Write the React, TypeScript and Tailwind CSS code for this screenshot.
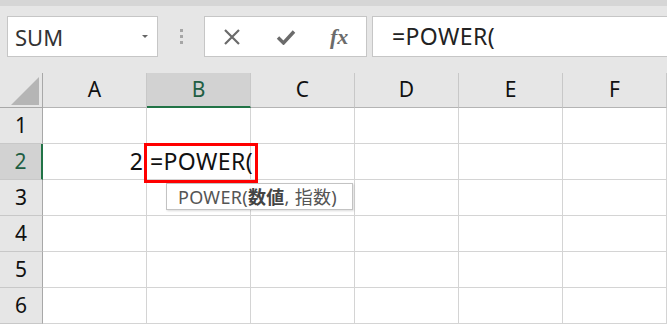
import React from 'react';

const columns = ['A', 'B', 'C', 'D', 'E', 'F'];
const rows = [1, 2, 3, 4, 5, 6];

export default function App() {
  return (
    <div className="relative w-[667px] h-[325px] overflow-hidden bg-white font-['Noto_Sans','Noto_Sans_CJK_JP',sans-serif]">
      {/* Top strip */}
      <div className="h-[6px] bg-[#d6d6d6]" />

      {/* Formula bar */}
      <div className="h-[67px] bg-[#e6e6e6] flex items-start pt-[10px] pl-[7px]">
        <div className="w-[151px] h-[41px] bg-white border border-[#c6c6c6] flex items-center justify-between pl-[7px] pr-[9px]">
          <span className="text-[22px] text-[#333] leading-none">SUM</span>
          <svg width="6" height="3" viewBox="0 0 6 3">
            <polygon points="0,0 6,0 3,3" fill="#666" />
          </svg>
        </div>
        <div className="w-[46px] h-[41px] flex flex-col items-center justify-center gap-[3px]">
          <span className="w-[3px] h-[3px] bg-[#a6a6a6]" />
          <span className="w-[3px] h-[3px] bg-[#a6a6a6]" />
          <span className="w-[3px] h-[3px] bg-[#a6a6a6]" />
        </div>
        <div className="w-[163px] h-[41px] bg-white border border-[#c6c6c6] flex items-center">
          <div className="w-[54px] flex justify-center">
            <svg width="18" height="16" viewBox="0 0 18 16">
              <path d="M2 1 L16 15 M16 1 L2 15" stroke="#6b6b6b" strokeWidth="2.2" fill="none" />
            </svg>
          </div>
          <div className="w-[54px] flex justify-center">
            <svg width="20" height="16" viewBox="0 0 20 16">
              <path d="M2 8.5 L7.5 14 L18 2.5" stroke="#6b6b6b" strokeWidth="3.4" fill="none" strokeLinejoin="miter" />
            </svg>
          </div>
          <div className="w-[54px] flex justify-center">
            <span className="font-['Liberation_Serif',serif] italic font-bold text-[22px] text-[#6b6b6b] leading-none">fx</span>
          </div>
        </div>
        <div className="ml-[5px] flex-1 h-[41px] bg-white border-y border-l border-[#c6c6c6] flex items-center pl-[19px]">
          <span className="text-[23px] text-[#222] leading-none tracking-[0.4px]">=POWER(</span>
        </div>
      </div>

      {/* Sheet grid */}
      <div className="grid grid-cols-[43px_repeat(6,104px)] grid-rows-[35px_repeat(6,36px)]">
        <div className="bg-[#e6e6e6] border-r border-b border-[#a8a8a8] flex items-end justify-end pr-[3px] pb-[2px]">
          <svg width="28" height="28" viewBox="0 0 28 28">
            <polygon points="28,0 28,28 0,28" fill="#b5b5b5" />
          </svg>
        </div>
        {columns.map(c =>
          c === 'B' ? (
            <div key={c} className="bg-[#d2d2d2] border-r border-[#c8c8c8] border-b-2 border-b-[#217346] flex items-center justify-center text-[21px] text-[#215e43]">
              {c}
            </div>
          ) : (
            <div key={c} className="bg-[#e6e6e6] border-r border-[#c8c8c8] border-b border-b-[#b4b4b4] flex items-center justify-center text-[21px] text-[#111]">
              {c}
            </div>
          )
        )}
        {rows.map(r => (
          <React.Fragment key={r}>
            {r === 2 ? (
              <div className="bg-[#d2d2d2] border-r-2 border-r-[#217346] border-b border-b-[#c8c8c8] flex items-center justify-center text-[21px] text-[#215e43]">
                {r}
              </div>
            ) : (
              <div className="bg-[#e6e6e6] border-r border-r-[#a8a8a8] border-b border-b-[#c8c8c8] flex items-center justify-center text-[21px] text-[#111]">
                {r}
              </div>
            )}
            {columns.map(c => (
              <div key={c} className="border-r border-b border-[#d4d4d4] flex items-center">
                {r === 2 && c === 'A' && (
                  <span className="ml-auto pr-[3px] text-[23px] text-[#111] leading-none">2</span>
                )}
                {r === 2 && c === 'B' && (
                  <span className="pl-[3px] text-[23px] text-[#111] leading-none whitespace-nowrap tracking-[0.4px]">=POWER(</span>
                )}
              </div>
            ))}
          </React.Fragment>
        ))}
      </div>

      {/* Red highlight around the edited cell */}
      <div className="absolute left-[144px] top-[143px] w-[114px] h-[40px] border-[3px] border-[#ff0000]" />

      {/* Function argument tooltip */}
      <div className="absolute left-[166px] top-[183px] w-[187px] h-[27px] bg-white border border-[#c3c3c3] shadow-[1px_1px_2px_rgba(0,0,0,0.15)] flex items-center pl-[11px] text-[18px] text-[#555] leading-none whitespace-nowrap tracking-[0.3px]">
        POWER(<b className="font-bold text-[#444]">数値</b>, 指数)
      </div>
    </div>
  );
}
